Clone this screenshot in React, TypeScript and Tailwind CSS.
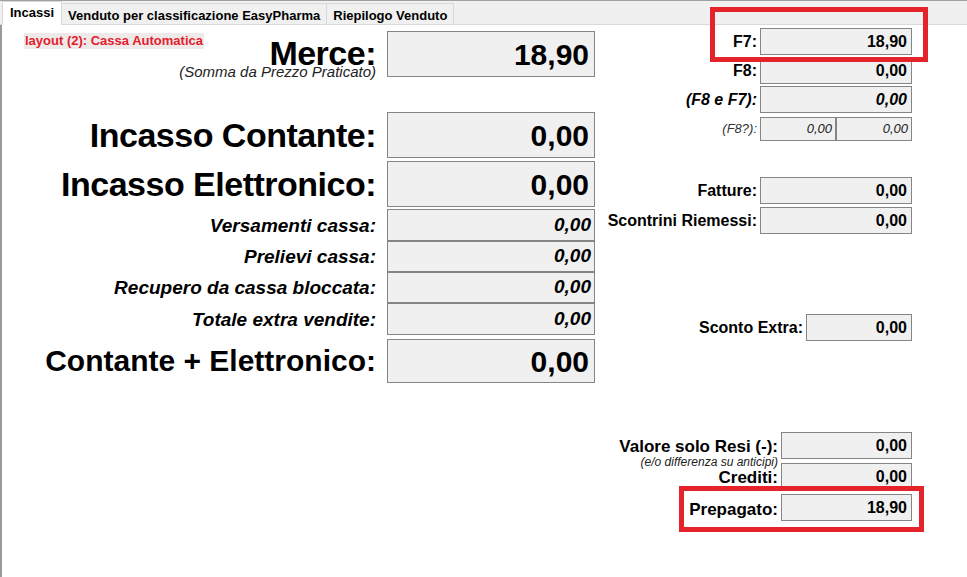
import React from 'react';

const box = 'flex items-center justify-end border border-[#858585] bg-[#f0f0f0]';

function BigRow({ label, value, labelClass, boxClass }: { label: string; value: string; labelClass: string; boxClass: string }) {
  return (
    <div className="flex items-center gap-[11px]">
      <div className={`w-[374px] whitespace-nowrap text-right font-bold ${labelClass}`}>{label}</div>
      <div className={`${box} w-[208px] pr-[5px] text-[30px] font-bold ${boxClass}`}>{value}</div>
    </div>
  );
}

function SmallRow({ label, value, boxClass }: { label: string; value: string; boxClass: string }) {
  return (
    <div className="flex items-center gap-[11px]">
      <div className="w-[374px] whitespace-nowrap text-right text-[19px] font-bold italic leading-[19px]">{label}</div>
      <div className={`${box} w-[208px] pr-[3px] text-[19px] font-bold italic ${boxClass}`}>{value}</div>
    </div>
  );
}

function SideRow({ label, value, className, italic }: { label: string; value: string; className: string; italic?: boolean }) {
  return (
    <div className={`flex items-center justify-end gap-[3px] ${className}`}>
      <span className={`whitespace-nowrap text-[16px] font-bold leading-[18px] ${italic ? 'italic' : ''}`}>{label}</span>
      <div className={`${box} h-[27px] w-[152px] pr-[4px] text-[16px] font-bold ${italic ? 'italic' : ''}`}>{value}</div>
    </div>
  );
}

export default function App() {
  return (
    <div className="relative h-[577px] w-[967px] overflow-hidden bg-white text-black [font-family:'Liberation_Sans',Arial,sans-serif]">
      {/* TABS */}
      <div className="flex h-[25px] items-end border-t border-b border-t-[#a0a0a0] border-b-[#d9d9d9] bg-[#f0f0f0] pl-[2px]">
        <div className="relative z-10 -mb-px h-[24px] border border-b-0 border-[#d9d9d9] bg-white px-[7px] pt-[4px] text-[13px] font-bold leading-[13px]">
          Incassi
        </div>
        <div className="h-[21px] whitespace-nowrap border border-b-0 border-l-0 border-[#d9d9d9] px-[6px] pt-[5px] text-[13px] font-bold leading-[13px]">
          Venduto per classificazione EasyPharma
        </div>
        <div className="h-[21px] whitespace-nowrap border border-b-0 border-l-0 border-[#d9d9d9] px-[6px] pt-[5px] text-[13px] font-bold leading-[13px]">
          Riepilogo Venduto
        </div>
      </div>

      {/* CONTENT */}
      <div className="flex h-[552px] border-l-2 border-[#9a9a9a]">
        {/* LEFT */}
        <div className="flex w-[593px] shrink-0 flex-col">
          <div className="mt-[6px] flex h-[46px] gap-[11px]">
            <div className="grid w-[374px]">
              <span className="col-start-1 row-start-1 ml-[22px] mt-[2px] self-start justify-self-start whitespace-nowrap bg-[#efeaea] px-px text-[13px] font-bold leading-[16px] text-[#e3202c]">
                layout (2): Cassa Automatica
              </span>
              <div className="col-start-1 row-start-1 flex flex-col items-end self-start justify-self-end pt-[9px]">
                <span className="whitespace-nowrap text-[34px] font-bold leading-[26px] tracking-[-0.5px]">Merce:</span>
                <span className="whitespace-nowrap text-[15px] italic leading-[12px] text-[#222]">(Somma da Prezzo Praticato)</span>
              </div>
            </div>
            <div className={`${box} h-[46px] w-[208px] pr-[5px] text-[30px] font-bold`}>18,90</div>
          </div>

          <div className="mt-[35px]">
            <BigRow label="Incasso Contante:" value="0,00" labelClass="text-[34px] leading-[34px] tracking-[-0.5px]" boxClass="h-[46px]" />
          </div>
          <div className="mt-[3px]">
            <BigRow label="Incasso Elettronico:" value="0,00" labelClass="text-[34px] leading-[34px] tracking-[-0.5px]" boxClass="h-[46px]" />
          </div>

          <div className="mt-[2px] flex flex-col">
            <SmallRow label="Versamenti cassa:" value="0,00" boxClass="h-[32px]" />
            <SmallRow label="Prelievi cassa:" value="0,00" boxClass="h-[31px]" />
            <SmallRow label="Recupero da cassa bloccata:" value="0,00" boxClass="h-[31px]" />
            <SmallRow label="Totale extra vendite:" value="0,00" boxClass="h-[32px]" />
          </div>

          <div className="mt-[4px]">
            <BigRow label="Contante + Elettronico:" value="0,00" labelClass="text-[30px] leading-[30px]" boxClass="h-[44px]" />
          </div>
        </div>

        {/* RIGHT */}
        <div className="flex flex-1 flex-col pr-[55px]">
          <SideRow label="F7:" value="18,90" className="mt-[3px]" />
          <SideRow label="F8:" value="0,00" className="mt-[2px]" />
          <SideRow label="(F8 e F7):" value="0,00" className="mt-[2px]" italic />

          <div className="mt-[4px] flex items-center justify-end gap-[3px]">
            <span className="text-[13px] italic leading-[14px] text-[#333]">(F8?):</span>
            <div className="flex">
              <div className={`${box} h-[24px] w-[76px] pr-[3px] text-[13px] italic text-[#222]`}>0,00</div>
              <div className={`${box} h-[24px] w-[76px] pr-[3px] text-[13px] italic text-[#222]`}>0,00</div>
            </div>
          </div>

          <SideRow label="Fatture:" value="0,00" className="mt-[36px]" />
          <SideRow label="Scontrini Riemessi:" value="0,00" className="mt-[3px]" />

          <div className="mt-[80px] flex items-center justify-end gap-[3px]">
            <span className="whitespace-nowrap text-[16px] font-bold leading-[18px]">Sconto Extra:</span>
            <div className={`${box} h-[27px] w-[106px] pr-[4px] text-[16px] font-bold`}>0,00</div>
          </div>

          {/* RESI / CREDITI / PREPAGATO */}
          <div className="mt-[91px] flex items-start justify-end gap-[3px]">
            <div className="flex flex-col items-end whitespace-nowrap pt-[5px]">
              <span className="text-[17px] font-bold leading-[20px]">Valore solo Resi (-):</span>
              <span className="text-[12px] italic leading-[11px] text-[#222]">(e/o differenza su anticipi)</span>
              <span className="text-[17px] font-bold leading-[20px]">Crediti:</span>
              <span className="mt-[12px] text-[17px] font-bold leading-[20px]">Prepagato:</span>
            </div>
            <div className="flex flex-col gap-[4px]">
              <div className={`${box} h-[27px] w-[131px] pr-[4px] text-[16px] font-bold`}>0,00</div>
              <div className={`${box} h-[27px] w-[131px] pr-[4px] text-[16px] font-bold`}>0,00</div>
              <div className={`${box} h-[27px] w-[131px] pr-[4px] text-[16px] font-bold`}>18,90</div>
            </div>
          </div>
        </div>
      </div>

      {/* RED HIGHLIGHTS */}
      <div className="pointer-events-none absolute left-[710px] top-[7px] h-[55px] w-[218px] border-[5px] border-[#e4232b]" />
      <div className="pointer-events-none absolute left-[679px] top-[486px] h-[46px] w-[245px] border-[5px] border-[#e4232b]" />
    </div>
  );
}
